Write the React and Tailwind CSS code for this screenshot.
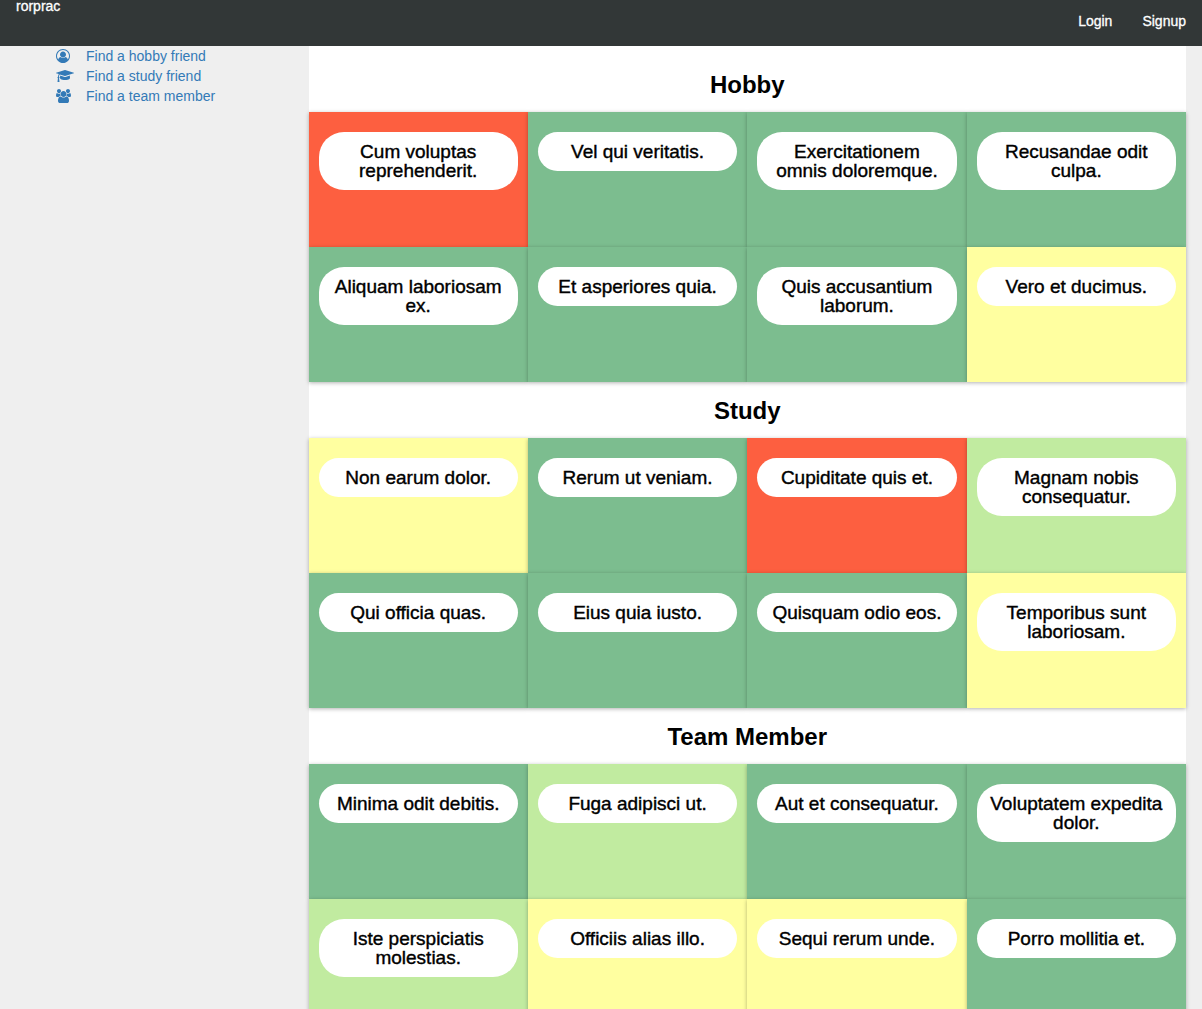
const RED = "bg-[#fd5f40]";
const GREEN = "bg-[#7cbd8f]";
const YELLOW = "bg-[#ffffa0]";
const LIME = "bg-[#c1eba0]";

const sections = [
  {
    title: "Hobby",
    posts: [
      ["Cum voluptas reprehenderit.", RED],
      ["Vel qui veritatis.", GREEN],
      ["Exercitationem omnis doloremque.", GREEN],
      ["Recusandae odit culpa.", GREEN],
      ["Aliquam laboriosam ex.", GREEN],
      ["Et asperiores quia.", GREEN],
      ["Quis accusantium laborum.", GREEN],
      ["Vero et ducimus.", YELLOW],
    ],
  },
  {
    title: "Study",
    posts: [
      ["Non earum dolor.", YELLOW],
      ["Rerum ut veniam.", GREEN],
      ["Cupiditate quis et.", RED],
      ["Magnam nobis consequatur.", LIME],
      ["Qui officia quas.", GREEN],
      ["Eius quia iusto.", GREEN],
      ["Quisquam odio eos.", GREEN],
      ["Temporibus sunt laboriosam.", YELLOW],
    ],
  },
  {
    title: "Team Member",
    posts: [
      ["Minima odit debitis.", GREEN],
      ["Fuga adipisci ut.", LIME],
      ["Aut et consequatur.", GREEN],
      ["Voluptatem expedita dolor.", GREEN],
      ["Iste perspiciatis molestias.", LIME],
      ["Officiis alias illo.", YELLOW],
      ["Sequi rerum unde.", YELLOW],
      ["Porro mollitia et.", GREEN],
    ],
  },
];

const links = [
  {
    label: "Find a hobby friend",
    viewBox: "0 0 1792 1792",
    path: "M896 0q182 0 348 71t286 191 191 286 71 348q0 181-70.500 347t-190.500 286-286 191.500-349 71.500-349-71-285.500-191.500-190.500-286-71-347.500 71-348 191-286 286-191 348-71zM1515 1351q149-205 149-455 0-156-61-298t-164-245-245-164-298-61-298 61-245 164-164 245-61 298q0 250 149 455 66-327 306-327 131 128 313 128t313-128q240 0 306 327zM1280 704q0-159-112.500-271.500t-271.500-112.500-271.500 112.500-112.500 271.500 112.500 271.500 271.500 112.500 271.500-112.500 112.500-271.500z",
  },
  {
    label: "Find a study friend",
    viewBox: "0 0 2304 1792",
    path: "M1774 836l18 316q4 69-82 128t-235 93.500-323 34.500-323-34.500-235-93.500-82-128l18-316 574 181q22 7 48 7t48-7zM2304 512q0 23-22 31l-1120 352q-4 1-10 1t-10-1l-652-206q-43 34-71 111.500t-34 178.500q63 36 63 109 0 69-58 107l58 433q2 14-8 25-9 11-24 11h-192q-15 0-24-11-10-11-8-25l58-433q-58-38-58-107 0-73 65-111 11-207 98-330l-333-104q-22-8-22-31t22-31l1120-352q4-1 10-1t10 1l1120 352q22 8 22 31z",
  },
  {
    label: "Find a team member",
    viewBox: "0 0 1920 1792",
    path: "M593 896q-162 5-265 128h-134q-82 0-138-40.500t-56-118.500q0-353 124-353 6 0 43.500 21t97.500 42.500 119 21.500q67 0 133-23-5 37-5 66 0 139 81 256zM1664 1533q0 120-73 189.500t-194 69.500h-874q-121 0-194-69.500t-73-189.500q0-53 3.500-103.500t14-109 26.500-108.500 43-97.500 62-81 85.500-53.500 111.500-20q10 0 43 21.500t73 48 107 48 135 21.500 135-21.500 107-48 73-48 43-21.500q61 0 111.500 20t85.500 53.500 62 81 43 97.500 26.500 108.500 14 109 3.500 103.500zM640 256q0 106-75 181t-181 75-181-75-75-181 75-181 181-75 181 75 75 181zM1344 640q0 159-112.500 271.500t-271.500 112.500-271.500-112.500-112.500-271.500 112.500-271.500 271.500-112.500 271.500 112.500 112.500 271.500zM1920 865q0 78-56 118.500t-138 40.500h-134q-103-123-265-128 81-117 81-256 0-29-5-66 66 23 133 23 59 0 119-21.500t97.500-42.500 43.500-21q124 0 124 353zM1792 256q0 106-75 181t-181 75-181-75-75-181 75-181 181-75 181 75 75 181z",
  },
];

function Navbar() {
  return (
    <header className="flex items-start justify-between bg-[#323737] px-4 text-sm text-white [-webkit-text-stroke:0.3px_white]">
      <a href="#home" className="leading-3">rorprac</a>
      <nav className="flex gap-[30px] pt-[11px] pb-[15px] leading-5">
        <a href="#login">Login</a>
        <a href="#signup">Signup</a>
      </nav>
    </header>
  );
}

function Sidebar() {
  return (
    <aside className="w-1/4 pl-10 text-sm leading-5 text-[#337ab7]">
      <ul>
        {links.map((link) => (
          <li key={link.label}>
            <a href="#find" className="flex items-center">
              <span className="w-[30px]">
                <svg viewBox={link.viewBox} className="h-3.5 w-auto" fill="currentColor" aria-hidden="true">
                  <path d={link.path} />
                </svg>
              </span>
              {link.label}
            </a>
          </li>
        ))}
      </ul>
    </aside>
  );
}

function Section({ title, posts }) {
  return (
    <section>
      <h2 className="pt-4 pb-3.5 text-center text-2xl leading-[26px] font-bold">{title}</h2>
      <div className="grid auto-rows-[135px] grid-cols-4">
        {posts.map(([text, color]) => (
          <a
            key={text}
            href="#post"
            className={`block px-2.5 pt-5 shadow-[0_1px_4px_rgba(0,0,0,0.3)] ${color}`}
          >
            <h3 className="rounded-[25px] bg-white p-2.5 text-center text-[19px] leading-[19px] [-webkit-text-stroke:0.4px_black]">
              {text}
            </h3>
          </a>
        ))}
      </div>
    </section>
  );
}

export default function App() {
  return (
    <div className="min-h-screen bg-[#efefef] font-['Liberation_Sans',Arial,sans-serif] text-black">
      <Navbar />
      <div className="flex px-4">
        <Sidebar />
        <main className="w-3/4 bg-white pt-2.5">
          {sections.map((section) => (
            <Section key={section.title} {...section} />
          ))}
        </main>
      </div>
    </div>
  );
}
